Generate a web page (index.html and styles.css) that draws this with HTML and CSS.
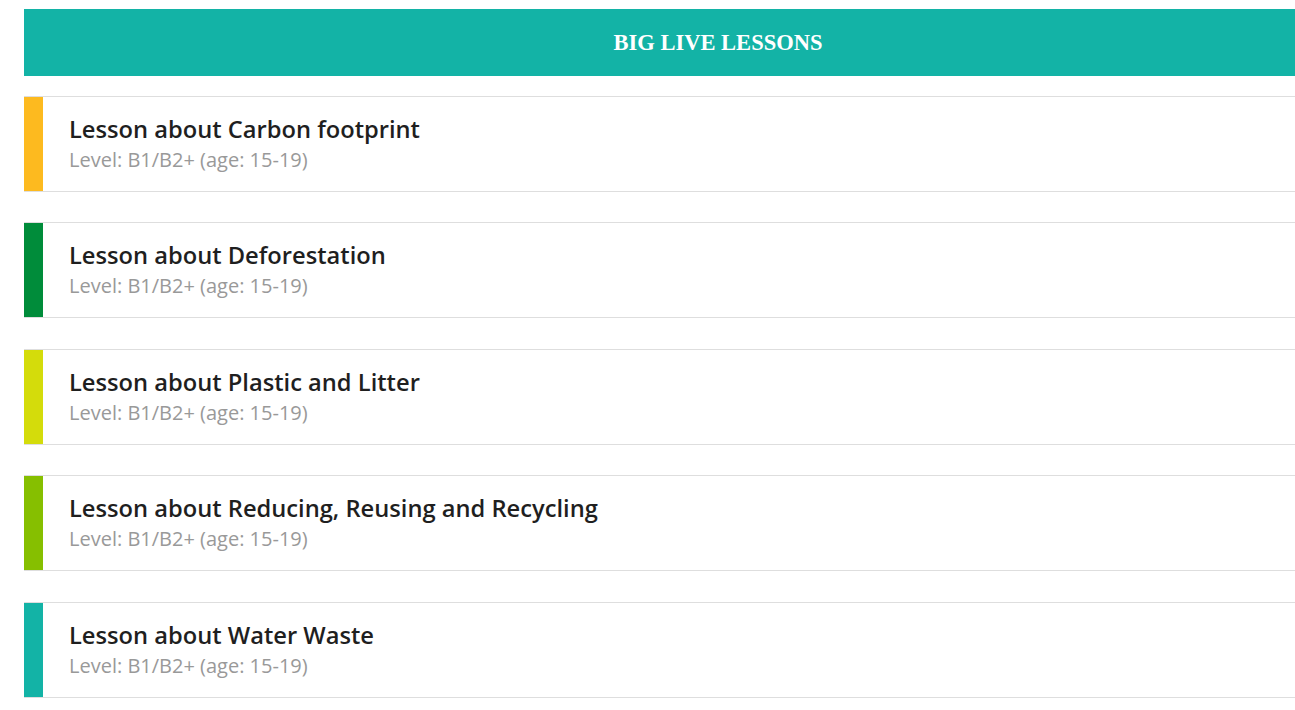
FILE: index.html
```html
<!DOCTYPE html>
<html>

<head>
    <title>Big Live Lessons</title>
    <link rel="stylesheet" href="styles.css">
</head>

<body>

    <div id="lessons">
        <div class="banner">BIG LIVE LESSONS</div>

        <div class="lesson">
            <div class="stripe yellow"></div>
            <div class="info">
                <div class="name">Lesson about Carbon footprint</div>
                <div class="level">Level: B1/B2+ (age: 15-19)</div>
            </div>
        </div>

        <div class="lesson">
            <div class="stripe green"></div>
            <div class="info">
                <div class="name">Lesson about Deforestation</div>
                <div class="level">Level: B1/B2+ (age: 15-19)</div>
            </div>
        </div>

        <div class="lesson">
            <div class="stripe lime"></div>
            <div class="info">
                <div class="name">Lesson about Plastic and Litter</div>
                <div class="level">Level: B1/B2+ (age: 15-19)</div>
            </div>
        </div>

        <div class="lesson">
            <div class="stripe grass"></div>
            <div class="info">
                <div class="name">Lesson about Reducing, Reusing and Recycling</div>
                <div class="level">Level: B1/B2+ (age: 15-19)</div>
            </div>
        </div>

        <div class="lesson">
            <div class="stripe teal"></div>
            <div class="info">
                <div class="name">Lesson about Water Waste</div>
                <div class="level">Level: B1/B2+ (age: 15-19)</div>
            </div>
        </div>
    </div>

</body>

</html>
```

FILE: styles.css
```css
html {
    overflow: hidden;
}

body {
    margin: 0;
    padding: 9px 0 0 24px;
    font-family: "Open Sans", Arial, sans-serif;
    background: #fff;
}

#lessons {
    width: 1388px;
    display: flex;
    flex-direction: column;
    gap: 30.4px;
}

.banner {
    height: 67px;
    display: flex;
    justify-content: center;
    align-items: center;
    background: #13b3a6;
    color: #fff;
    font-family: "Liberation Serif", "Times New Roman", serif;
    font-weight: bold;
    font-size: 22.5px;
    margin-bottom: -10.4px;
}

.lesson {
    display: flex;
    height: 94px;
    border-top: 1px solid #dedede;
    border-bottom: 1px solid #dedede;
}

.stripe {
    width: 19px;
    flex: none;
}

.yellow { background: #fdba1f; }
.green { background: #008c3a; }
.lime { background: #d4dc0b; }
.grass { background: #86bf00; }
.teal { background: #13b3a6; }

.info {
    padding: 16px 0 0 26px;
}

.name {
    font-size: 23.7px;
    font-weight: 600;
    color: #1f1f1f;
    line-height: 32px;
}

.level {
    font-size: 20px;
    color: #999;
    line-height: 30px;
}
```
